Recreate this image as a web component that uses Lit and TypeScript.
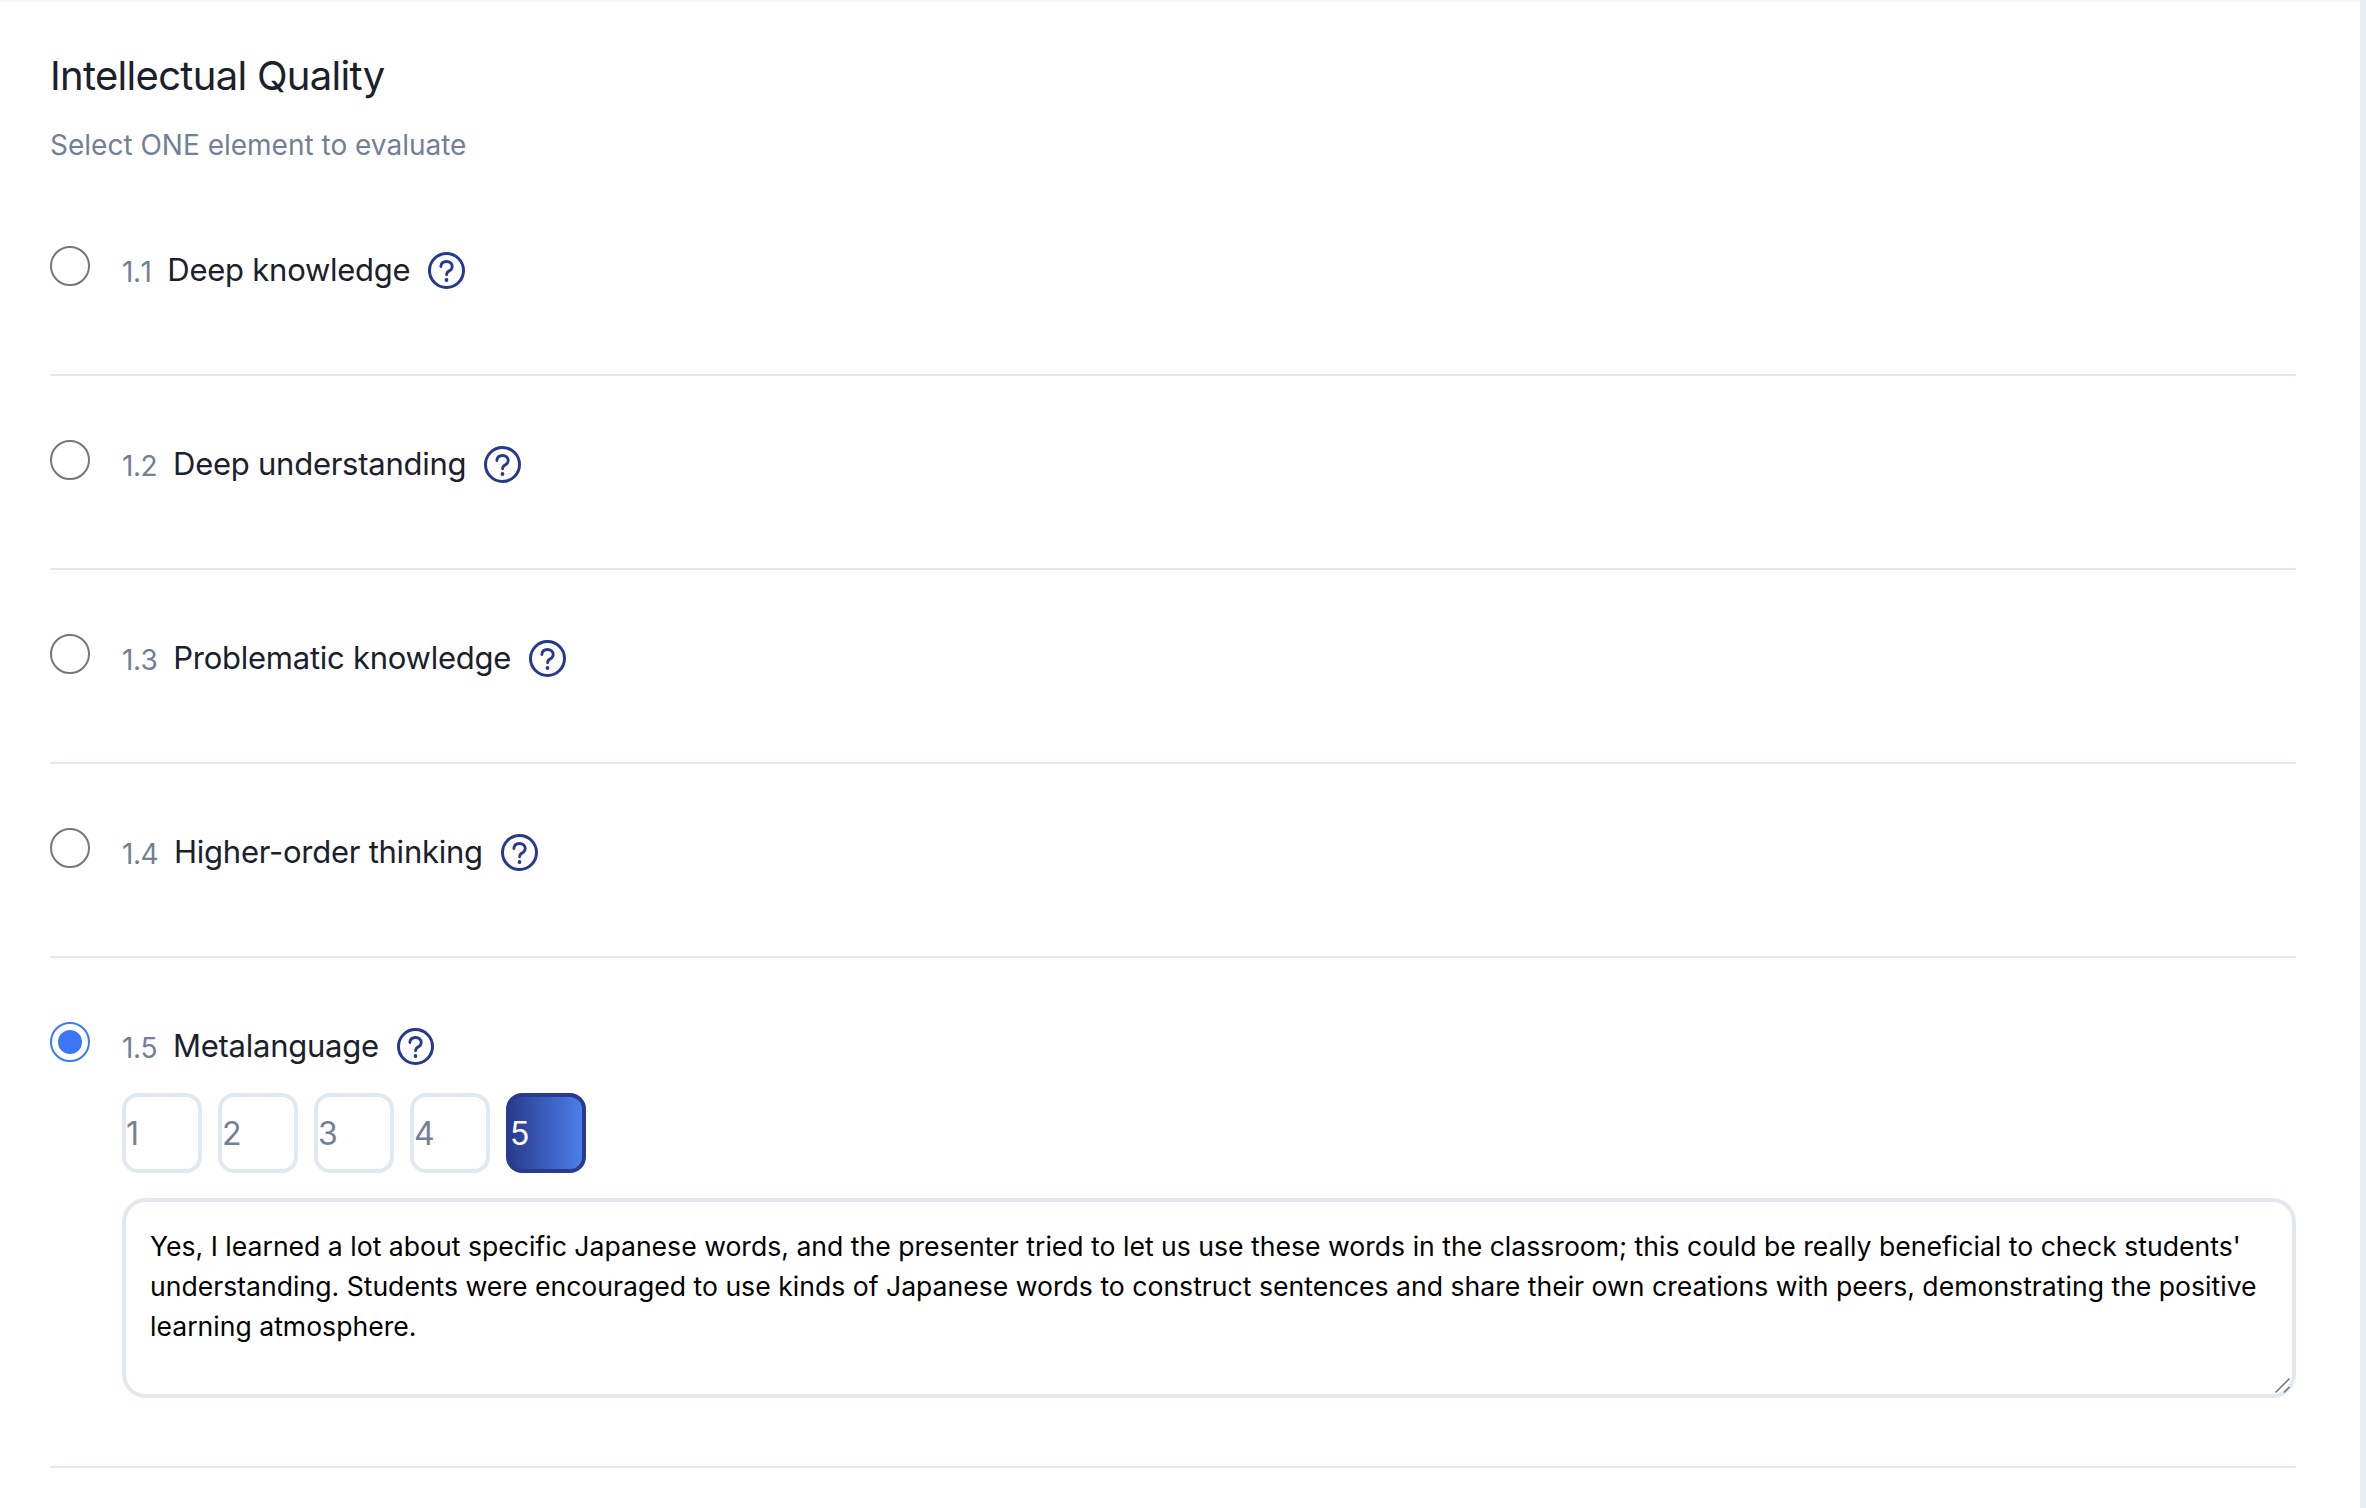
import { LitElement, html, css } from "lit";
import { customElement } from "lit/decorators.js";

const ITEMS = [
  { n: "1.1", label: "Deep knowledge" },
  { n: "1.2", label: "Deep understanding" },
  { n: "1.3", label: "Problematic knowledge" },
  { n: "1.4", label: "Higher-order thinking" },
  { n: "1.5", label: "Metalanguage", selected: true },
];

const TEXT =
  "Yes, I learned a lot about specific Japanese words, and the presenter tried to let us use these words in the classroom; this could be really beneficial to check students' understanding. Students were encouraged to use kinds of Japanese words to construct sentences and share their own creations with peers, demonstrating the positive learning atmosphere.";

@customElement("app-root")
export class AppRoot extends LitElement {
  static styles = css`
    :host {
      display: flex;
      width: 2366px;
      height: 1508px;
      overflow: hidden;
      background: #fff;
      font-family: Inter, "Liberation Sans", sans-serif;
      box-sizing: border-box;
    }
    * { box-sizing: border-box; }
    .main {
      flex: 1;
      min-width: 0;
      border-top: 2px solid #f7f8fa;
      padding: 50px 64px 0 50px;
    }
    .strip { width: 6px; background: #e9edf3; }
    h1 {
      margin: 0;
      font-size: 40px;
      line-height: 48px;
      font-weight: 400;
      color: #1a202c;
      letter-spacing: -0.7px;
    }
    .sub {
      margin: 23px 0 0;
      font-size: 28px;
      line-height: 44px;
      color: #718096;
    }
    .list { margin-top: 79px; }
    .row {
      display: flex;
      gap: 32px;
      height: 194px;
      padding-top: 64px;
      border-bottom: 2px solid #e2e8f0;
    }
    .row:first-child { padding-top: 0; height: 130px; }
    .row.selected { height: 510px; }
    .radio {
      flex: none;
      width: 40px;
      height: 40px;
      border-radius: 50%;
      border: 2px solid #767676;
      background: #fff;
    }
    .selected .radio {
      border-color: #3b7bf6;
      padding: 6px;
    }
    .dot {
      width: 24px;
      height: 24px;
      border-radius: 50%;
      background: #3b76f6;
    }
    .body { flex: 1; min-width: 0; }
    .head {
      display: flex;
      align-items: center;
      height: 44px;
      margin-top: 2px;
    }
    .num {
      font-size: 28px;
      color: #718096;
      letter-spacing: -0.5px;
      font-feature-settings: "kern" 0, "calt" 0;
      margin-right: 16px;
      padding-top: 3px;
    }
    .label {
      font-size: 31px;
      line-height: 44px;
      color: #1a202c;
      letter-spacing: -0.25px;
      margin-right: 18px;
    }
    .help { display: block; flex: none; width: 37px; height: 37px; }
    .scale {
      display: flex;
      gap: 16px;
      margin-top: 25px;
    }
    .box {
      width: 80px;
      height: 80px;
      border: 4px solid #e2e8f0;
      border-radius: 16px;
      display: flex;
      align-items: center;
      font-size: 32px;
      color: #718096;
    }
    .box.on {
      background: linear-gradient(90deg, #2a3b8f, #4c7fea);
      border-color: #2a3b8f;
      color: #fff;
    }
    .field {
      position: relative;
      margin-top: 25px;
    }
    textarea {
      display: block;
      width: 100%;
      height: 200px;
      padding: 24px;
      border: 4px solid #e2e8f0;
      border-radius: 24px;
      font: 26.6px/40px Inter, "Liberation Sans", sans-serif;
      color: #000;
      background: #fff;
      outline: none;
      resize: none;
      overflow: hidden;
    }
    .grip {
      position: absolute;
      right: 4px;
      bottom: 4px;
      width: 18px;
      height: 18px;
      pointer-events: none;
    }
  `;

  private helpIcon() {
    return html`<svg class="help" viewBox="0 0 37 37" fill="none" aria-hidden="true">
      <circle cx="18.500" cy="18.500" r="17" stroke="#26398c" stroke-width="3"></circle>
      <path d="M12.800 14.500c.3-3 2.600-5 5.700-5 3.300 0 5.700 2 5.700 4.900 0 2.100-1.100 3.300-2.800 4.400-1.800 1.100-2.800 2-2.800 4" stroke="#26398c" stroke-width="2.800" stroke-linecap="round"></path>
      <circle cx="18.500" cy="28" r="1.900" fill="#26398c"></circle>
    </svg>`;
  }

  render() {
    return html`
      <div class="main">
        <h1>Intellectual Quality</h1>
        <p class="sub">Select ONE element to evaluate</p>
        <div class="list">
          ${ITEMS.map(
            (it) => html`
              <div class="row ${it.selected ? "selected" : ""}">
                <div class="radio">${it.selected ? html`<div class="dot"></div>` : ""}</div>
                <div class="body">
                  <div class="head">
                    <span class="num">${it.n}</span>
                    <span class="label">${it.label}</span>
                    ${this.helpIcon()}
                  </div>
                  ${it.selected
                    ? html`
                        <div class="scale">
                          ${[1, 2, 3, 4, 5].map(
                            (v) => html`<div class="box ${v === 5 ? "on" : ""}">${v}</div>`
                          )}
                        </div>
                        <div class="field">
                          <textarea>${TEXT}</textarea>
                          <svg class="grip" viewBox="0 0 18 18" fill="none" aria-hidden="true">
                            <path d="M1.500 16.500 15.500 2.500M10 16.500l5.500-5.500" stroke="#6f6f6f" stroke-width="1.500"></path>
                          </svg>
                        </div>
                      `
                    : ""}
                </div>
              </div>
            `
          )}
        </div>
      </div>
      <div class="strip"></div>
    `;
  }
}
